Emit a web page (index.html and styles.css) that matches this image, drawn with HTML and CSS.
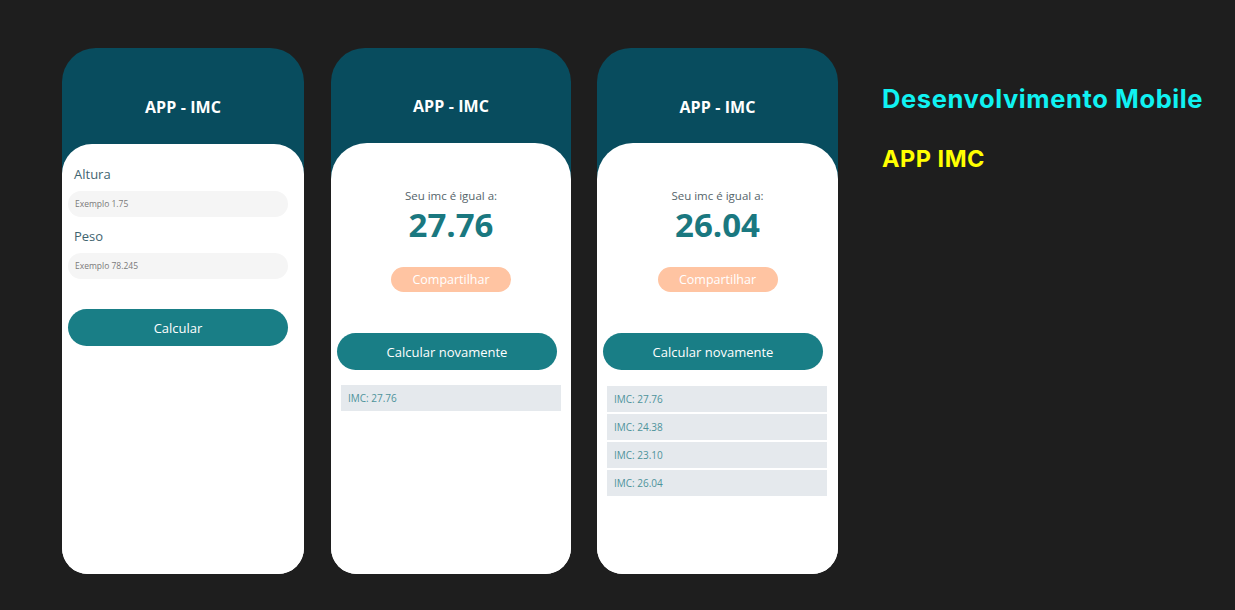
FILE: index.html
```html
<!DOCTYPE html>
<html lang="pt">
<head>
<meta charset="utf-8">
<title>APP - IMC</title>
<link rel="stylesheet" href="styles.css">
</head>
<body>
<div class="stage">
  <div class="phone p1">
    <div class="header"><h1 class="title">APP - IMC</h1></div>
    <div class="content form">
      <label class="label">Altura</label>
      <div class="input">Exemplo 1.75</div>
      <label class="label">Peso</label>
      <div class="input">Exemplo 78.245</div>
      <button class="btn calc">Calcular</button>
    </div>
  </div>

  <div class="phone p2">
    <div class="header"><h1 class="title">APP - IMC</h1></div>
    <div class="content result">
      <p class="caption">Seu imc é igual a:</p>
      <p class="value">27.76</p>
      <button class="share">Compartilhar</button>
      <button class="btn again">Calcular novamente</button>
      <ul class="history">
        <li>IMC: 27.76</li>
      </ul>
    </div>
  </div>

  <div class="phone p3">
    <div class="header"><h1 class="title">APP - IMC</h1></div>
    <div class="content result">
      <p class="caption">Seu imc é igual a:</p>
      <p class="value">26.04</p>
      <button class="share">Compartilhar</button>
      <button class="btn again">Calcular novamente</button>
      <ul class="history">
        <li>IMC: 27.76</li>
        <li>IMC: 24.38</li>
        <li>IMC: 23.10</li>
        <li>IMC: 26.04</li>
      </ul>
    </div>
  </div>

  <div class="side">
    <h2 class="side-title">Desenvolvimento Mobile</h2>
    <h3 class="side-sub">APP IMC</h3>
  </div>
</div>
</body>
</html>
```

FILE: styles.css
```css
* { box-sizing: border-box; }
html, body { margin: 0; padding: 0; }
body {
  background: #1e1e1e;
  width: 1235px;
  height: 610px;
  overflow: hidden;
  font-family: "Open Sans", "Noto Sans", sans-serif;
}
.stage {
  display: flex;
  align-items: flex-start;
  padding: 48px 0 0 62px;
}
.phone {
  height: 526px;
  border-radius: 34px 34px 26px 26px;
  background: linear-gradient(#084c5e 0 160px, #ffffff 160px);
  display: flex;
  flex-direction: column;
  overflow: hidden;
}
.p1 { width: 242px; }
.p2 { width: 240px; margin-left: 27px; }
.p3 { width: 241px; margin-left: 26px; }

.header {
  height: 95px;
  flex: none;
  display: flex;
  justify-content: center;
  padding-top: 47px;
}
.p2 .header { padding-top: 46px; }
.title {
  margin: 0;
  color: #ffffff;
  font-size: 16px;
  font-weight: 700;
  line-height: 24px;
  letter-spacing: 0.1px;
}
.content {
  flex: 1;
  background: #ffffff;
  border-radius: 36px 36px 0 0;
  display: flex;
  flex-direction: column;
}
.p1 .content { border-radius: 30px 30px 0 0; margin-top: 1px; }

.form { padding: 20px 16px 0 6px; }
.label {
  display: block;
  color: #3f6470;
  font-size: 13px;
  line-height: 20px;
  margin-left: 6px;
}
.input {
  height: 26px;
  margin-top: 7px;
  margin-bottom: 9px;
  background: #f5f5f5;
  border-radius: 13px;
  padding-left: 7px;
  color: #7a7a7a;
  font-size: 8.5px;
  line-height: 26px;
}
.btn {
  height: 37px;
  border: none;
  border-radius: 19px;
  background: #197e86;
  color: #ffffff;
  font-family: inherit;
  font-size: 13px;
  padding: 0;
  width: 220px;
}
.calc { margin-top: 21px; }

.result {
  align-items: center;
  padding-top: 44px;
}
.caption {
  margin: 0;
  color: #55646a;
  font-size: 11.5px;
  line-height: 18px;
}
.value {
  margin: 1px 0 0;
  color: #1a7880;
  font-size: 33px;
  font-weight: 700;
  line-height: 38px;
}
.share {
  margin-top: 23px;
  width: 120px;
  height: 25px;
  border: none;
  border-radius: 13px;
  background: #ffc4a2;
  color: #ffffff;
  font-family: inherit;
  font-size: 12.5px;
  padding: 0;
}
.again {
  margin-top: 41px;
  align-self: flex-start;
  margin-left: 6px;
}
.p3 .again { margin-top: 41px; }
.history {
  list-style: none;
  margin: 15px 0 0 10px;
  padding: 0;
  width: 220px;
  align-self: flex-start;
  display: flex;
  flex-direction: column;
  gap: 2px;
}
.p3 .history { margin-top: 16px; }
.history li {
  height: 26px;
  background: #e5e9ed;
  color: #4e939b;
  font-size: 10px;
  line-height: 27px;
  padding-left: 7px;
}

.side {
  margin-left: 44px;
  padding-top: 35px;
}
.side-title {
  margin: 0;
  color: #10f2f2;
  font-family: "Inter", "Lato", sans-serif;
  font-size: 25.5px;
  font-weight: 700;
  line-height: 32px;
  letter-spacing: 0.6px;
}
.side-sub {
  margin: 29px 0 0;
  color: #ffff00;
  font-family: "Inter", "Lato", sans-serif;
  font-size: 23.5px;
  font-weight: 700;
  line-height: 30px;
  letter-spacing: 0.5px;
}
```
